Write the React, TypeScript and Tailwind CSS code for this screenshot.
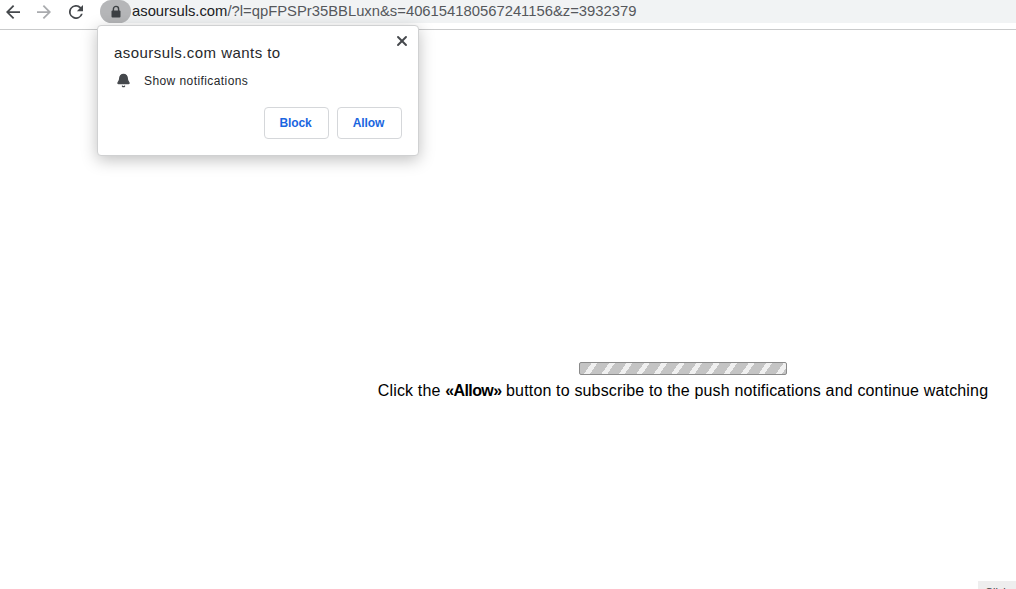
import { Bell, X } from 'lucide-react';

function LockIcon() {
  return (
    <svg width="12" height="13" viewBox="0 0 12 13" fill="none">
      <path d="M3.4 6V4a2.6 2.6 0 0 1 5.2 0v2" stroke="#3c4043" strokeWidth="1.4" />
      <rect x="1.5" y="5.5" width="9" height="7" rx="1" fill="#3c4043" />
    </svg>
  );
}

function BackIcon({ className }: { className?: string }) {
  return (
    <svg width="14" height="14" viewBox="0 0 16 16" fill="currentColor" className={className}>
      <path d="M16 7H3.83l5.59-5.59L8 0 0 8l8 8 1.41-1.41L3.83 9H16z" />
    </svg>
  );
}

function ReloadIcon({ className }: { className?: string }) {
  return (
    <svg width="14" height="14" viewBox="0 0 16 16" fill="currentColor" className={className}>
      <path d="M13.65 2.35A8 8 0 1 0 15.73 10h-2.08A6 6 0 1 1 8 2c1.66 0 3.14.69 4.22 1.78L9 7h7V0l-2.35 2.35z" />
    </svg>
  );
}

function Toolbar() {
  return (
    <div className="relative h-[30px] border-b border-[#c9cacb] bg-white flex items-start">
      <div className="flex items-center w-[100px] h-[23px] pl-[6px] text-[#45484c]">
        <BackIcon />
        <BackIcon className="ml-[17px] rotate-180 text-[#a9abae]" />
        <ReloadIcon className="ml-[18px]" />
      </div>
      <div className="flex-1 h-[23px] bg-[#f1f3f4] rounded-l-[14px] flex items-center relative">
        <div className="w-[31px] h-[23px] bg-[#b5b6b8] rounded-[14px] flex items-center justify-center shrink-0">
          <LockIcon />
        </div>
        <span className="ml-[1px] text-[14.8px] text-[#55585c]">
          <span className="text-[#202124]">asoursuls.com</span>/?l=qpFPSPr35BBLuxn&amp;s=406154180567241156&amp;z=3932379
        </span>
      </div>
    </div>
  );
}

function PermissionPopup() {
  return (
    <div className="absolute left-[97px] top-[25px] w-[322px] h-[131px] bg-white rounded-[4px] border border-[#d0d1d2] shadow-[0_4px_16px_rgba(0,0,0,0.25)] px-[16px]">
      <button className="absolute right-[8px] top-[7px] text-[#45484c]">
        <X size={16} strokeWidth={2.8} />
      </button>
      <div className="pt-[17px] text-[15px] leading-[20px] tracking-[0.45px] text-[#26282b]">asoursuls.com wants to</div>
      <div className="mt-[9px] flex items-center h-[18px] text-[12px] tracking-[0.42px] text-[#26282b]">
        <Bell size={15} strokeWidth={2} fill="#45484c" className="text-[#45484c] ml-[2px] -mt-[1px]" />
        <span className="ml-[13px]">Show notifications</span>
      </div>
      <div className="mt-[17px] flex justify-end gap-[8px]">
        <button className="w-[65px] h-[32px] pr-[2px] rounded-[4px] border border-[#d5d7da] text-[12px] font-bold tracking-[-0.1px] text-[#1a66e0]">Block</button>
        <button className="w-[65px] h-[32px] pr-[2px] rounded-[4px] border border-[#d5d7da] text-[12px] font-bold tracking-[-0.1px] text-[#1a66e0]">Allow</button>
      </div>
    </div>
  );
}

function StripedBar() {
  return (
    <div className="w-[208px] h-[13px] rounded-[2px] border border-[#8a8a8a] bg-[repeating-linear-gradient(125deg,#c4c4c4_0px,#c4c4c4_9.5px,#f0f0f0_9.5px,#f0f0f0_14.3px)]" />
  );
}

export default function App() {
  return (
    <div className="relative w-[1016px] h-[589px] overflow-hidden bg-white font-['Liberation_Sans',Arial,sans-serif]">
      <Toolbar />
      <PermissionPopup />
      <div className="pt-[332px] pl-[350px] flex flex-col items-center">
        <StripedBar />
        <p className="mt-[6px] text-[16px] leading-[20px] tracking-[0.16px] text-black whitespace-nowrap">
          Click the <b className="tracking-[-0.6px]">«Allow»</b> button to subscribe to the push notifications and continue watching
        </p>
      </div>
      <div className="absolute left-[978px] top-[581px] w-[40px] h-[12px] bg-[#eeeeee] overflow-hidden text-[11px] leading-[14px] pt-[4px] pl-[7px] text-[#444]">Click</div>
    </div>
  );
}
